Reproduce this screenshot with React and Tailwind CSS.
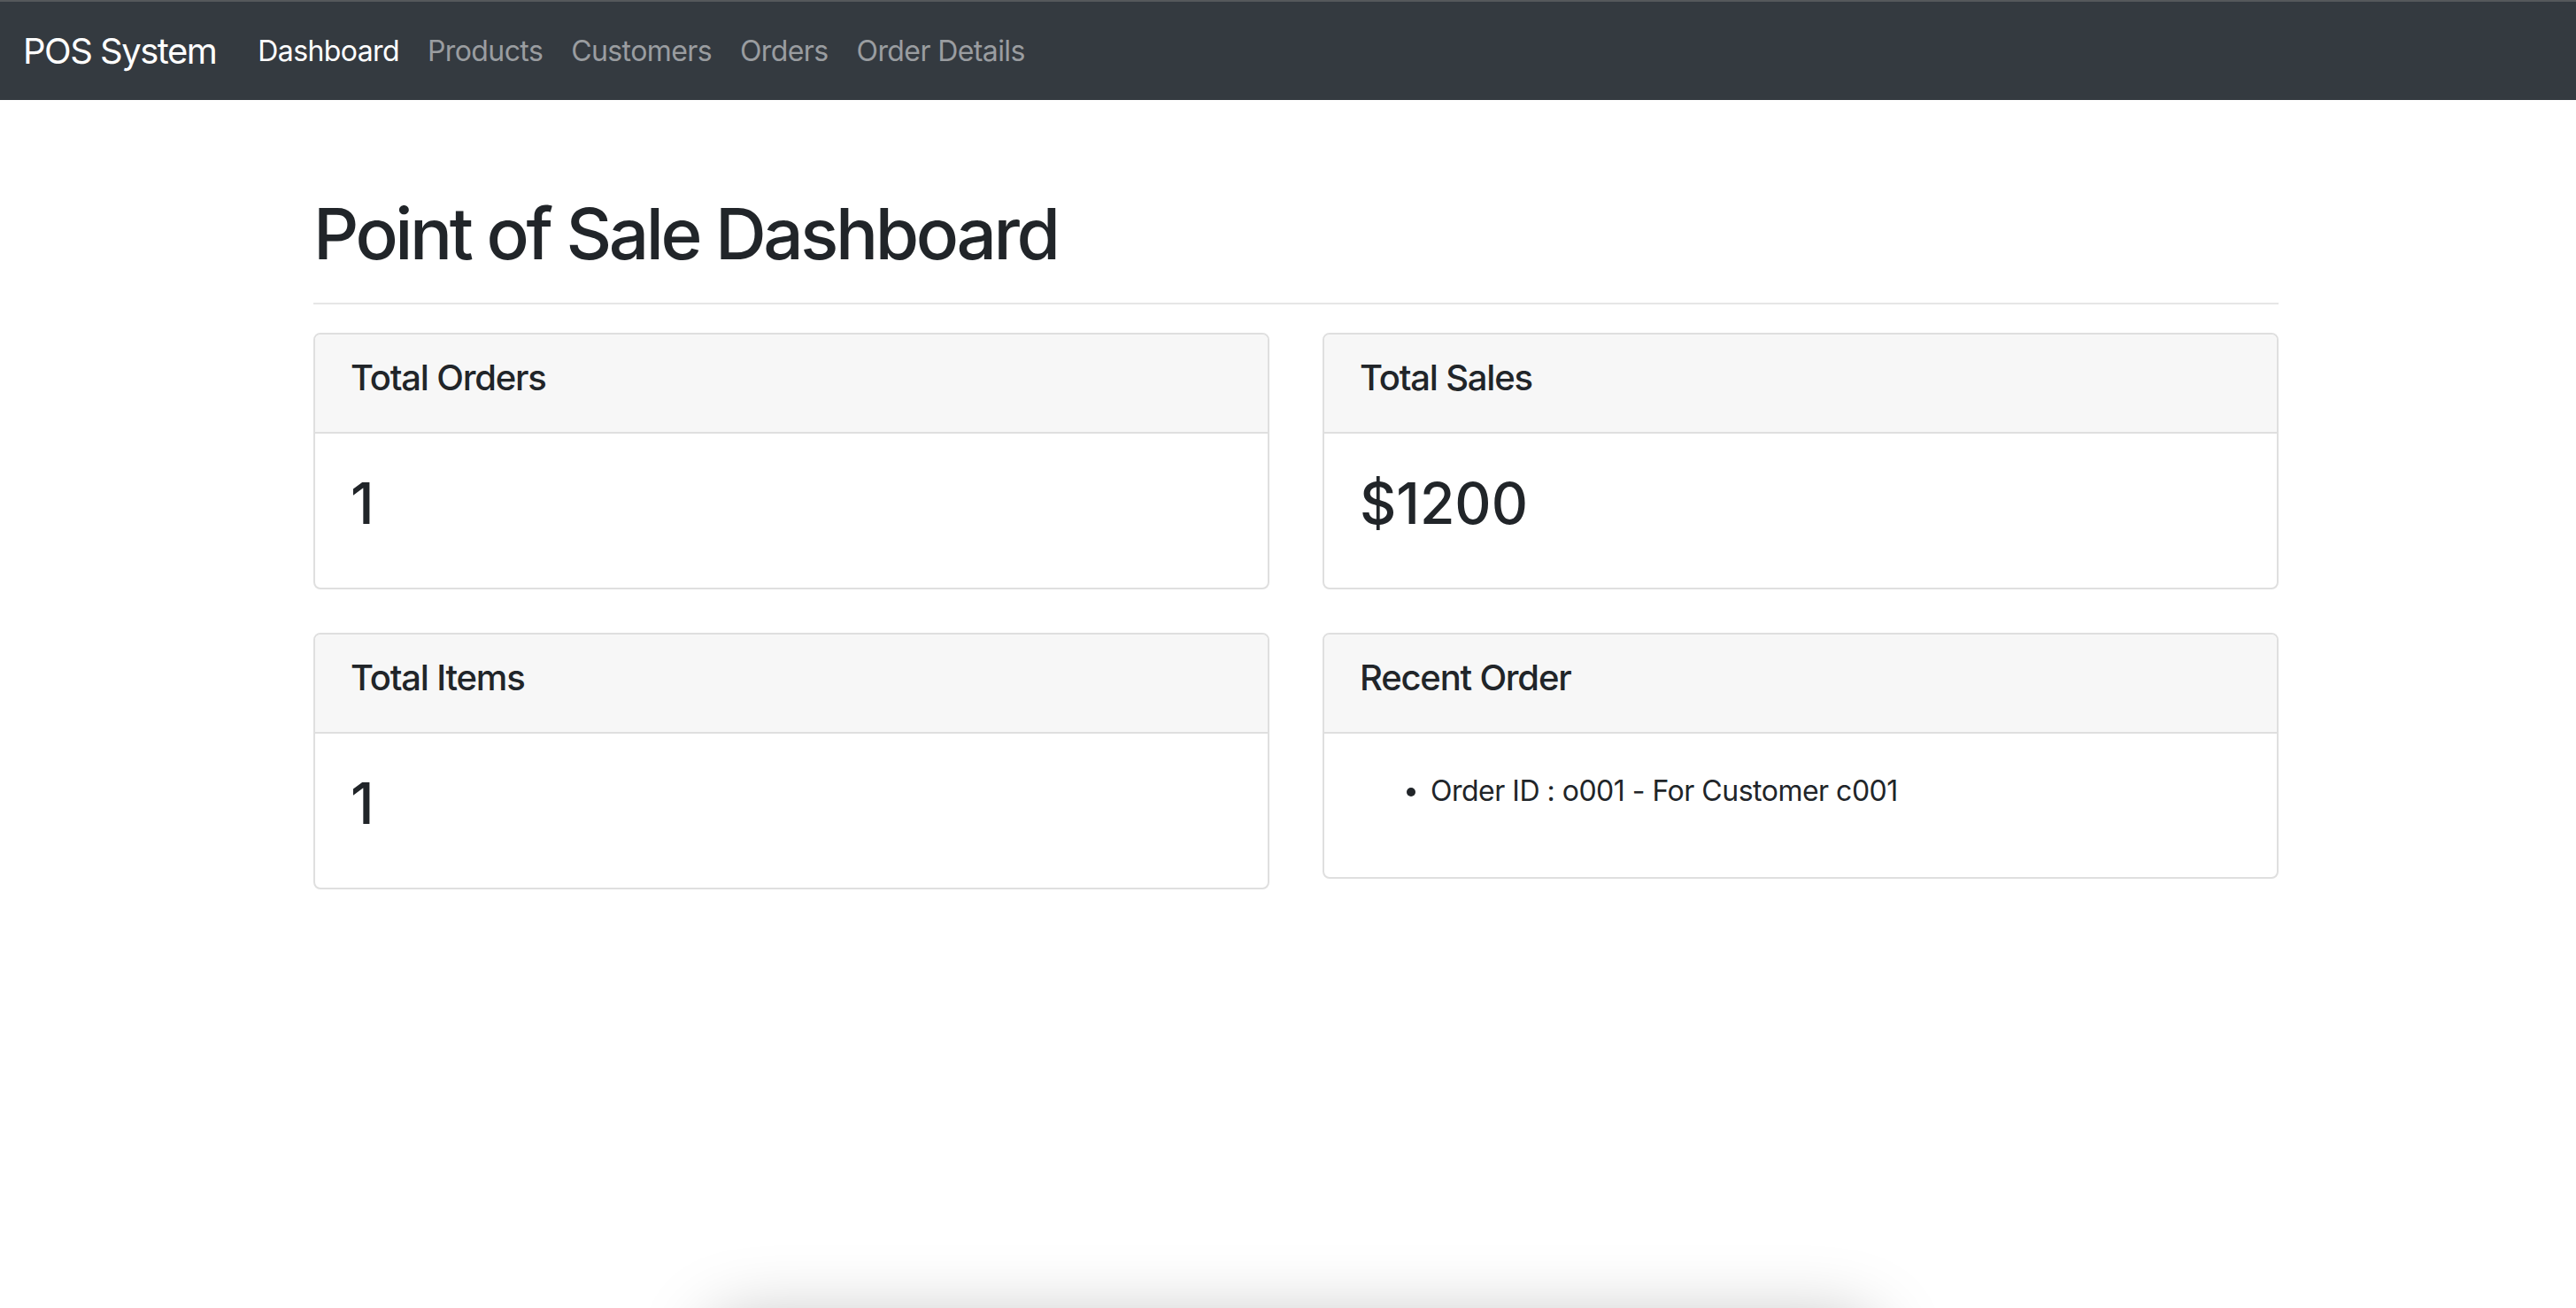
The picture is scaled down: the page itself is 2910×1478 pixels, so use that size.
import React from 'react';

const links = [
  { label: 'Dashboard', active: true },
  { label: 'Products' },
  { label: 'Customers' },
  { label: 'Orders' },
  { label: 'Order Details' },
];

function StatCard({ title, children, bodyClass = 'h-[174px]' }) {
  return (
    <div className="rounded-[8px] border-2 border-[#dfdfdf] bg-white overflow-hidden">
      <div className="h-[112px] border-b-2 border-[#dfdfdf] bg-[#f7f7f7] px-[40px] pt-[25px]">
        <h5 className="text-[40px] leading-[48px] font-medium tracking-[-1.2px] text-[#212529]">{title}</h5>
      </div>
      <div className={`${bodyClass} px-[40px] pt-[41px]`}>{children}</div>
    </div>
  );
}

export default function App() {
  return (
    <div
      className="relative h-[1478px] overflow-hidden bg-white text-[#212529]"
      style={{ fontFamily: 'Inter, "Noto Sans", sans-serif' }}
    >
      {/* navbar */}
      <nav className="flex h-[113px] items-center border-t-2 border-[#55585b] bg-[#343a40] pl-[26px]">
        <span className="mr-[31px] text-[40px] tracking-[-1.5px] text-white">POS System</span>
        <ul className="flex items-center">
          {links.map((l) => (
            <li key={l.label}>
              <a
                href="#"
                className={`block px-[16px] text-[32px] leading-[48px] tracking-[-0.6px] ${
                  l.active ? 'text-white' : 'text-[#9a9da0]'
                }`}
              >
                {l.label}
              </a>
            </li>
          ))}
        </ul>
      </nav>

      {/* content */}
      <div className="ml-[354px] w-[2220px] pt-[103px]">
        <h1 className="mb-[16px] text-[80px] leading-[96px] font-medium tracking-[-3.4px]">Point of Sale Dashboard</h1>
        <hr className="mt-[30px] mb-[32px] border-t-2 border-[#e6e6e6]" />

        <div className="grid grid-cols-2 gap-x-[60px] gap-y-[49px] items-start">
          <StatCard title="Total Orders">
            <h2 className="text-[64px] leading-[76px] font-medium">1</h2>
          </StatCard>
          <StatCard title="Total Sales">
            <h2 className="text-[64px] leading-[76px] font-medium">$1200</h2>
          </StatCard>
          <StatCard title="Total Items">
            <h2 className="text-[64px] leading-[76px] font-medium">1</h2>
          </StatCard>
          <StatCard title="Recent Order" bodyClass="h-[162px]">
            <ul className="list-disc pl-[80px] text-[32px] leading-[48px] tracking-[-0.5px]">
              <li>Order ID : o001 - For Customer c001</li>
            </ul>
          </StatCard>
        </div>
      </div>

      {/* shadow peeking in from below the fold */}
      <div className="absolute left-[800px] top-[1490px] h-[200px] w-[1320px] rounded-[40px] bg-white shadow-[0_0_80px_rgba(0,0,0,0.25)]" />
    </div>
  );
}
